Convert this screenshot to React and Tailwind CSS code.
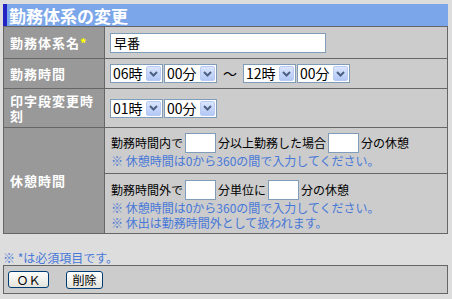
import React from 'react';

const font = "font-['Noto_Sans_CJK_JP',sans-serif]";

const Sel = ({ v }) => (
    <div className="flex h-[19px] w-[53px] items-stretch border border-[#7f9db9] bg-white">
        <span className="flex-1 pl-[2px] text-[14px] leading-[17px] text-black">{v}</span>
        <span className="my-[1px] mr-[1px] flex w-[15px] items-center justify-center rounded-[2px] border border-[#b9cbf3] bg-gradient-to-b from-[#dbe6fe] to-[#b3c8f5]">
            <svg width="9" height="6" viewBox="0 0 9 6">
                <path d="M1 1l3.5 3.5L8 1" stroke="#4d6185" strokeWidth="2" fill="none" />
            </svg>
        </span>
    </div>
);

const Box = () => <input className="mx-[2px] h-[20px] w-[31px] border border-[#7f9db9] bg-white" />;

const Label = ({ children }) => (
    <div className="flex items-center bg-[#999999] pl-[6px] pr-[4px] text-[13px] font-bold leading-[15px] tracking-[1px] text-white">
        <div>{children}</div>
    </div>
);

const Note = ({ children }) => <div className="text-[12px] leading-[15px] text-[#4878d8]">{children}</div>;

export default function App() {
    return (
        <div className={`h-[299px] w-full bg-[#dddddd] pt-[4px] pl-[3px] ${font}`}>
            <div className="w-[445px]">
                {/* Title */}
                <div className="flex h-[22px] items-center border-l-[4px] border-[#2424c4] bg-[#7ba6e9] pl-[2px] text-[17px] font-bold leading-none text-white">
                    勤務体系の変更
                </div>

                {/* Form table */}
                <div className="grid grid-cols-[100px_1fr] grid-rows-[31px_29px_38px_105px] gap-px border border-[#666666] bg-[#666666] text-[12px] text-black">
                    <Label>
                        勤務体系名<span className="text-[#ffff00]">*</span>
                    </Label>
                    <div className="flex items-center bg-[#cccccc] pl-[5px]">
                        <div className="flex h-[20px] w-[216px] items-center border border-[#7f9db9] bg-white pl-[3px] text-[13px]">早番</div>
                    </div>

                    <Label>勤務時間</Label>
                    <div className="flex items-center bg-[#cccccc] pl-[5px]">
                        <Sel v="06時" />
                        <div className="ml-[1px]"><Sel v="00分" /></div>
                        <span className="px-[6px] text-[14px]">〜</span>
                        <Sel v="12時" />
                        <div className="ml-[1px]"><Sel v="00分" /></div>
                    </div>

                    <Label>印字段変更時刻</Label>
                    <div className="flex items-center bg-[#cccccc] pl-[5px]">
                        <Sel v="01時" />
                        <div className="ml-[1px]"><Sel v="00分" /></div>
                    </div>

                    <Label>休憩時間</Label>
                    <div className="flex flex-col gap-px bg-[#666666]">
                        <div className="h-[45px] bg-[#cccccc] pt-[5px] pl-[6px]">
                            <div className="flex h-[20px] items-center leading-[14px]">
                                勤務時間内で<Box />分以上勤務した場合<Box />分の休憩
                            </div>
                            <Note>※ 休憩時間は0から360の間で入力してください。</Note>
                        </div>
                        <div className="flex-1 bg-[#cccccc] pt-[6px] pl-[6px]">
                            <div className="flex h-[20px] items-center leading-[14px]">
                                勤務時間外で<Box />分単位に<Box />分の休憩
                            </div>
                            <Note>※ 休憩時間は0から360の間で入力してください。</Note>
                            <Note>※ 休出は勤務時間外として扱われます。</Note>
                        </div>
                    </div>
                </div>

                <div className="mt-[16px]">
                    <Note>※ *は必須項目です。</Note>
                </div>

                {/* Buttons */}
                <div className="flex h-[29px] items-center gap-[17px] border border-[#666666] bg-[#cccccc] pl-[4px]">
                    <button className="h-[17px] w-[41px] rounded-[3px] border border-[#003c74] bg-gradient-to-b from-white to-[#e4e4dc] text-[12px] leading-[15px] text-black">
                        ＯＫ
                    </button>
                    <button className="h-[18px] w-[37px] rounded-[3px] border border-[#003c74] bg-gradient-to-b from-white to-[#e4e4dc] text-[12px] leading-[16px] text-black">
                        削除
                    </button>
                </div>
            </div>
        </div>
    );
}
